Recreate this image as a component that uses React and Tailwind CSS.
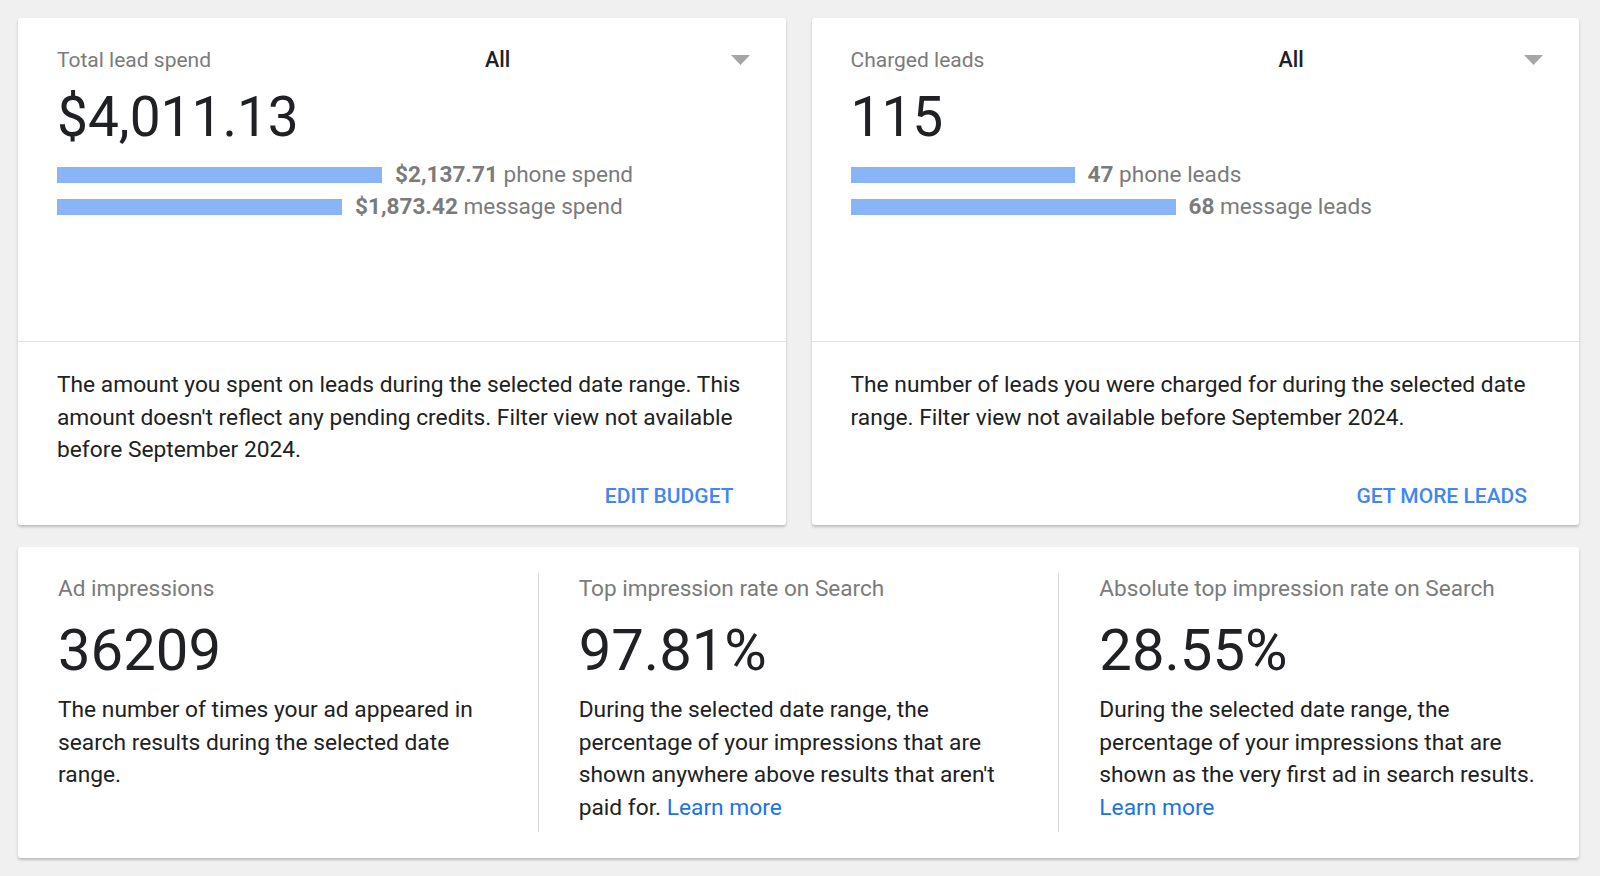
import React from "react";

const font = { fontFamily: "Roboto, 'Liberation Sans', sans-serif" };

const Caret = () => (
  <svg width="19" height="10" viewBox="0 0 19 10" className="shrink-0">
    <path d="M0 0 L19 0 L9.5 10 Z" fill="#a6a6a6" />
  </svg>
);

const BarRow = ({ width, value, label }) => (
  <div className="flex items-center h-[32px]">
    <div className="h-[16px] bg-[#8ab4f8]" style={{ width }} />
    <span className="ml-[13px] text-[22.6px] text-[#7b7b7b]">
      <span className="font-bold">{value}</span> {label}
    </span>
  </div>
);

const LeadCard = ({ title, total, rows, text, action }) => (
  <div className="bg-white rounded-[3px] shadow-[0_2px_3px_rgba(0,0,0,0.22)] flex flex-col h-[507px]">
    <div className="h-[324px] pl-[39px] pr-[36px] pt-[30px] border-b border-[#e0e0e0]">
      <div className="grid grid-cols-[428px_1fr] items-center h-[24px]">
        <span className="text-[21px] text-[#7b7b7b] leading-[24px]">{title}</span>
        <div className="flex items-center justify-between">
          <span className="text-[21.5px] font-medium text-[#202124] leading-[24px]">All</span>
          <Caret />
        </div>
      </div>
      <div className="text-[55px] leading-[60px] text-[#202124] mt-[15px]">{total}</div>
      <div className="mt-[12px]">
        {rows.map((r) => (
          <BarRow key={r.label} {...r} />
        ))}
      </div>
    </div>
    <div className="flex-1 flex flex-col pl-[39px] pr-[26px] pt-[27px] pb-[17px]">
      <p className="text-[22.75px] leading-[32.5px] text-[#212121]">{text}</p>
      <div className="mt-auto flex justify-end pr-[26px]">
        <button className="text-[21px] leading-[24px] font-medium text-[#4285f4] uppercase">{action}</button>
      </div>
    </div>
  </div>
);

const Stat = ({ title, value, children, border }) => (
  <div className={"flex-1 px-[40px] pt-[4px] " + (border ? "border-l border-[#dadada]" : "")}>
    <div className="text-[22.6px] leading-[24px] text-[#7b7b7b]">{title}</div>
    <div className="text-[58px] leading-[64px] text-[#202124] mt-[17px]">{value}</div>
    <p className="text-[22.75px] leading-[32.65px] text-[#212121] mt-[12px]">{children}</p>
  </div>
);

const LearnMore = () => (
  <a href="#" className="text-[#1a73e8]">Learn more</a>
);

export default function App() {
  return (
    <div className="min-h-screen bg-[#f0f0f0] pt-[18px] pl-[18px] pr-[21px] pb-[18px]" style={font}>
      <div className="grid grid-cols-2 gap-[26px]">
        <LeadCard
          title="Total lead spend"
          total="$4,011.13"
          rows={[
            { width: 325, value: "$2,137.71", label: "phone spend" },
            { width: 285, value: "$1,873.42", label: "message spend" },
          ]}
          text="The amount you spent on leads during the selected date range. This amount doesn't reflect any pending credits. Filter view not available before September 2024."
          action="Edit budget"
        />
        <LeadCard
          title="Charged leads"
          total="115"
          rows={[
            { width: 224, value: "47", label: "phone leads" },
            { width: 325, value: "68", label: "message leads" },
          ]}
          text="The number of leads you were charged for during the selected date range. Filter view not available before September 2024."
          action="Get more leads"
        />
      </div>
      <div className="mt-[22px] bg-white rounded-[3px] shadow-[0_2px_3px_rgba(0,0,0,0.22)] h-[311px] py-[26px] flex">
        <Stat title="Ad impressions" value="36209">
          The number of times your ad appeared in search results during the selected date range.
        </Stat>
        <Stat title="Top impression rate on Search" value="97.81%" border>
          During the selected date range, the percentage of your impressions that are shown anywhere above results that aren't paid for. <LearnMore />
        </Stat>
        <Stat title="Absolute top impression rate on Search" value="28.55%" border>
          During the selected date range, the percentage of your impressions that are shown as the very first ad in search results. <LearnMore />
        </Stat>
      </div>
    </div>
  );
}
